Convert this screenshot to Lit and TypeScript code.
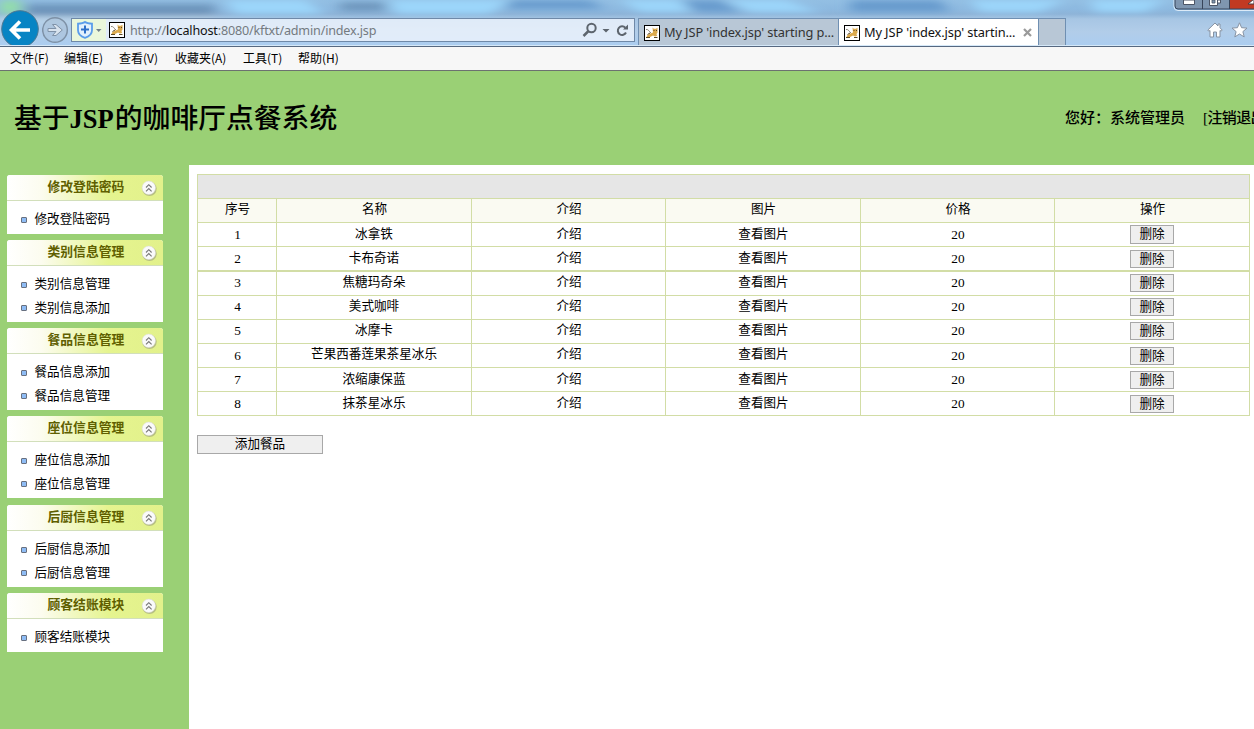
import { LitElement, html, css } from "lit";
import { customElement, property } from "lit/decorators.js";

const favicon = html`<svg width="16" height="16" viewBox="0 0 16 16">
  <rect x=".5" y=".5" width="15" height="15" fill="#fff" stroke="#000" />
  <path d="M2 4.500c2.500-.5 3 2 5 3.500" fill="none" stroke="#8a8678" stroke-width="1" />
  <path d="M8.500 2.500l1.300 1.300h2L13.500 2.800v4.700l-1 1.500.5 2-2 .500-2-1-3 1.500H2.500l1-2L6.500 8.500l2.500-1z" fill="#dba94c" />
  <path d="M9.500 5.500h1M12 5.500h1M2 12.500h4M10 12.500h3.500M3.500 9.500L6 8" stroke="#5b4a28" stroke-width="1" />
</svg>`;

@customElement("browser-bar")
class BrowserBar extends LitElement {
  static styles = css`
    :host { display: block; font-family: "Noto Sans", "Noto Sans CJK SC", sans-serif; }
    svg { display: block; flex: none; }
    .glass { position: relative; overflow: hidden; height: 46px; box-sizing: border-box; border-bottom: 1px solid #d5e8f8;
      background: linear-gradient(#93bfe3 0, #8db9e0 9px, #8eb4d8 14px, #a7c6e4 19px, #b2cde9 32px, #abcdf0 46px); }
    .haze { position: absolute; left: 0; top: 0; }
    .row { position: relative; display: flex; height: 45px; padding-left: 1px; box-sizing: border-box; }
    .back { margin-top: 10px; }
    .fwd { margin: 16px 0 0 2px; }
    .addr { display: flex; align-items: center; box-sizing: border-box; width: 564px; height: 24px; margin: 18px 0 0 2px;
      border: 1px solid #6f89a8; background: rgba(240, 246, 254, 0.76); color: #747a80; }
    .shield { display: flex; align-items: center; width: 34px; height: 22px; background: #eaf7dc; margin-right: 3px; }
    .url { flex: 1; margin-left: 5px; white-space: nowrap; font-size: 12.6px; letter-spacing: -0.18px; }
    .url b { font-weight: 400; color: #111; }
    .tools { margin-right: 2px; }
    .tab { display: flex; align-items: center; box-sizing: border-box; height: 27px; margin-top: 18px; padding: 1px 0 0 5px;
      border: 1px solid #6f8fb2; border-bottom: 0; font-size: 12.8px; letter-spacing: -0.12px; color: #333; background: #b8c7d6; white-space: nowrap; }
    .tab span { margin: -2px 0 0 4px; }
    .t1 { width: 201px; margin-left: 3px; }
    .t2 { width: 200px; background: #fff; color: #111; border-left: 0; }
    .t3 { width: 27px; border-left: 0; }
    .x { margin-left: 8px; }
    .right { display: flex; gap: 8px; margin: 22px 0 0 141px; }
    .win { position: absolute; right: 0; top: 0; }
    .menu { height: 25px; box-sizing: border-box; border-top: 1px solid #566880; border-bottom: 1px solid #6c7170; background: #f7f7f7;
      display: flex; padding-left: 10px; font: 12px/22px "Noto Sans CJK SC", sans-serif; color: #000; }
    .menu span { white-space: nowrap; width: 55px; }
    .menu .w54 { width: 54px; }
    .menu .w56 { width: 56px; }
    .menu .w68 { width: 68px; }
  `;
  render() {
    return html`
      <div class="glass">
        <svg class="haze" width="1254" height="46">
          <defs><filter id="f" x="-20%" y="-80%" width="140%" height="260%"><feGaussianBlur stdDeviation="7 3" /></filter></defs>
          <g filter="url(#f)">
            <path d="M25 4H215V16H25zM340 2h45v9h-45z" fill="#53779e" opacity=".55" />
            <path d="M0 0H20V14H0z" fill="#93dfa8" />
            <path d="M225 0h80l20 14h-90zM390 0h120l-20 14h-95zM620 0h60l10 12h-50zM725 0h60l35 12h-70zM970 0h95l-25 12h-60zM1090 0h75l-20 12h-50z" fill="#9ddaff" opacity=".85" />
            <path d="M510 0h80l15 9h-100zM680 0h40l22 12h-45zM850 0h90l10 12h-100z" fill="#5f94c9" opacity=".8" />
            <path d="M0 17H215V24H0z" fill="#c8ddef" opacity=".6" />
          </g>
        </svg>
        <div class="row">
          <svg class="back" width="39" height="35" viewBox="0 0 39 35">
            <circle cx="19" cy="19" r="18.300" fill="#0784c4" stroke="#4e7892" />
            <path d="M29 20H11M19 11.500L10.500 20l8.500 8.500" fill="none" stroke="#fff" stroke-width="3.600" />
          </svg>
          <svg class="fwd" width="27" height="28" viewBox="0 0 27 28">
            <circle cx="13" cy="14" r="12.300" fill="#a9c0d6" fill-opacity=".5" stroke="#7e91a6" stroke-width="1.500" />
            <path d="M6 12.500h8l-3.500-4H14l6.300 5.500-6.300 5.500h-3.500l3.500-4H6z" fill="#d8e3ee" stroke="#7f92a8" />
          </svg>
          <div class="addr">
            <div class="shield"><svg width="34" height="22" viewBox="0 0 34 22">
              <path d="M13 3c-1.800 1.400-4 1.600-7 1.600v6.600c0 4 3 6.300 7 7.600 4-1.300 7-3.600 7-7.600V4.600c-3 0-5.200-.2-7-1.600z" fill="#e2f1fd" stroke="#5a9dea" stroke-width="1.800" />
              <path d="M13 6.500v8M9 10.500h8" stroke="#2e70c8" stroke-width="2" />
              <path d="M24 10h5.500L26.700 13z" fill="#71808c" /></svg></div>
            ${favicon}
            <div class="url">http://<b>localhost</b>:8080/kftxt/admin/index.jsp</div>
            <svg class="tools" width="50" height="22" viewBox="0 0 50 22">
              <g fill="none" stroke="#5d656e" stroke-width="2">
                <circle cx="9.500" cy="9" r="4.200" /><path d="M6.500 12L1.500 17" stroke-width="2.500" />
                <path d="M43.300 8.700A4.300 4.300 0 1 0 44 13.500" />
              </g>
              <path d="M20.500 10h7L24 13.500zM41 10.500h5V5.500z" fill="#5d656e" />
            </svg>
          </div>
          <div class="tab t1">${favicon}<span>My JSP 'index.jsp' starting p...</span></div>
          <div class="tab t2">${favicon}<span>My JSP 'index.jsp' startin...</span>
            <svg class="x" width="9" height="9"><path d="M1 1l7 7M8 1L1 8" stroke="#9a9a9a" stroke-width="2.200" /></svg></div>
          <div class="tab t3"></div>
          <div class="right">
            <svg width="16" height="16" viewBox="0 0 16 16"><path d="M8 1L.8 8l1 1.200L3 8.500V15h3.500v-5h3v5H13V8.500l1.200.7 1-1.200L13 5.800V2h-2v2z" fill="#fff" stroke="#8793a3" /></svg>
            <svg width="17" height="16" viewBox="0 0 17 16"><path d="M8.500.8l2.100 4.900 5.400.4-4.100 3.500 1.300 5.300-4.700-2.900-4.700 2.900 1.300-5.300L1 6.100l5.400-.4z" fill="#fff" stroke="#8793a3" /></svg>
          </div>
        </div>
        <svg class="win" width="81" height="12" viewBox="0 0 81 12">
          <path d="M1 0v7q0 3.500 4 3.500h76" fill="none" stroke="#dcebf8" />
          <path d="M2 0v6q0 3 3 3h24V0z" fill="#7f96b0" /><path d="M30 0h26v9H30z" fill="#7f96b0" />
          <path d="M57 0h24v9H57z" fill="#c13a22" />
          <path d="M2 0v6q0 3 3 3h76M29.500 0v9M56.500 0v9" fill="none" stroke="#38455a" />
          <path d="M10.500 0h11v4.500h-11z" fill="#fff" stroke="#4c5566" />
          <path d="M36.500-1h8v6.500h-8z" fill="#fff" stroke="#4c5566" /><path d="M39 0h3v3h-3z" fill="#7f96b0" stroke="#4c5566" stroke-width=".8" /><path d="M45 0h2.500v3H45" fill="#fff" stroke="#4c5566" />
          <path d="M75 4l6-5v5z" fill="#fff" stroke="#4c3a40" />
        </svg>
      </div>
      <div class="menu"><span class="w54">文件(F)</span><span>编辑(E)</span><span class="w56">查看(V)</span><span class="w68">收藏夹(A)</span><span>工具(T)</span><span>帮助(H)</span></div>
    `;
  }
}

@customElement("side-panel")
class SidePanel extends LitElement {
  @property() heading = "";
  @property({ attribute: false }) items: string[] = [];
  static styles = css`
    :host { display: block; width: 156px; background: #fff; box-sizing: border-box; overflow: hidden;
      border-radius: 3px 3px 0 0; font-family: "Noto Sans CJK SC", sans-serif; }
    .head { display: flex; align-items: center; height: 26px; box-sizing: border-box; border-bottom: 1px solid #d2dfbb;
      background: linear-gradient(90deg, #fff 0, #fcfcef 22%, #e5f48f 65%, #e2f18b 100%); }
    .head span { flex: 1; padding-left: 40.500px; font-size: 12.8px; line-height: 22px; height: 26px; font-weight: 700; color: #5f5f00; white-space: nowrap; }
    .head svg { flex: none; margin-right: 5px; }
    .body { padding: 6px 0 0 14px; }
    .item { display: flex; align-items: center; height: 23.5px; box-sizing: border-box; padding-bottom: 1px; font-size: 12.6px; line-height: 22px; color: #000; white-space: nowrap; }
    .item i { box-sizing: border-box; width: 6px; height: 6px; border: 1px solid #68707f; border-radius: 1px; background: #8ebcf5; margin: 3px 7.500px 0 0; }
  `;
  render() {
    return html`<div class="head"><span>${this.heading}</span>
        <svg width="18" height="18" viewBox="0 0 18 18"><circle cx="9.500" cy="9.800" r="7.200" fill="#a4a97f" opacity=".7" /><circle cx="8.800" cy="8.800" r="6.700" fill="#fafafa" stroke="#ddd" stroke-width=".5" />
          <path d="M6 8.500L8.800 5.700l2.800 2.800M6 12.300l2.800-2.800 2.800 2.800" fill="none" stroke="#777" stroke-width="1.100" /></svg></div>
      <div class="body">${this.items.map((t) => html`<div class="item"><i></i>${t}</div>`)}</div>`;
  }
}

const panels: [string, string[], string][] = [
  ["修改登陆密码", ["修改登陆密码"], "h59"],
  ["类别信息管理", ["类别信息管理", "类别信息添加"], "h82"],
  ["餐品信息管理", ["餐品信息添加", "餐品信息管理"], "h82"],
  ["座位信息管理", ["座位信息添加", "座位信息管理"], "h82 late"],
  ["后厨信息管理", ["后厨信息添加", "后厨信息管理"], "h82"],
  ["顾客结账模块", ["顾客结账模块"], "h59"],
];
const dishes = ["冰拿铁", "卡布奇诺", "焦糖玛奇朵", "美式咖啡", "冰摩卡", "芒果西番莲果茶星冰乐", "浓缩康保蓝", "抹茶星冰乐"];
const rowClass = ["first low", "low", "thick up", "up", "up", "", "low", "low"];

@customElement("app-root")
class AppRoot extends LitElement {
  static styles = css`
    :host { display: flex; flex-direction: column; width: 1254px; height: 729px; overflow: hidden; background: #9ad075; color: #000;
      font-family: "Liberation Serif", "Noto Sans CJK SC", serif; }
    .banner { height: 94px; flex: none; display: flex; align-items: center; box-sizing: border-box; padding-left: 14px; white-space: nowrap; }
    .banner > * { flex: none; }
    h1 { margin: 1px 0 0; font-size: 27.8px; font-weight: 500; line-height: 40px; width: 1051px; }
    h1 b { font-weight: 700; font-size: 26.5px; margin-right: 1px; }
    .user, .out { font-size: 15px; font-weight: 500; line-height: 20px; margin-bottom: 3px; }
    .user { width: 138px; font-family: "Noto Sans CJK SC", sans-serif; }
    .out { letter-spacing: -0.6px; margin-bottom: 1px; }
    .mid { flex: 1; display: flex; min-height: 0; }
    .side { width: 189px; box-sizing: border-box; padding: 10px 0 0 7px; display: flex; flex-direction: column; gap: 6px; }
    .h59 { height: 59px; } .h82 { height: 82px; } .late { margin-bottom: 1px; }
    .main { flex: 1; background: #fff; padding: 9px 0 0 8px; }
    .table { width: 1053px; box-sizing: border-box; border-right: 1px solid #d2dda6; border-bottom: 1px solid #d2dda6; }
    .tr { display: grid; grid-template-columns: 79px 195px 194px 195px 194px 195px; height: 24px; box-sizing: border-box; border-top: 1px solid #d2dda6; }
    .thick { height: 25px; border-top-width: 2px; }
    .tr > div { border-left: 1px solid #d2dda6; display: flex; justify-content: center; align-items: flex-start; font-size: 12.6px; line-height: 21px; height: 23px; box-sizing: border-box; overflow: hidden; }
    .low > div { line-height: 23px; }
    .tr > .num { font-size: 13.3px; line-height: 23px; padding-left: 1px; }
    .up > .num { line-height: 21px; }
    .tr > .pad { padding-left: 1px; }
    .top > div { grid-column: 1 / -1; background: #e6e6e6; }
    .th > div { background: #fafaf2; }
    .btn { box-sizing: border-box; border: 1px solid #a8a8a8; background: #efefef; display: flex; align-items: flex-start; justify-content: center; font: 12.6px/13px "Noto Sans CJK SC", sans-serif; padding: 0; color: #000; }
    .del { width: 44px; height: 18px; margin-top: 3px; }
    .up .del { margin-top: 2px; }
    .first .del { height: 19px; margin-top: 2px; }
    .add { width: 126px; height: 19px; margin-top: 19px; }
  `;
  render() {
    return html`
      <browser-bar></browser-bar>
      <div class="banner"><h1>基于<b>JSP</b>的咖啡厅点餐系统</h1><span class="user">您好：系统管理员</span><span class="out">[注销退出]</span></div>
      <div class="mid">
        <div class="side">${panels.map(([h, i, c]) => html`<side-panel class=${c} .heading=${h} .items=${i}></side-panel>`)}</div>
        <div class="main">
          <div class="table">
            <div class="tr top"><div></div></div>
            <div class="tr th">${["序号", "名称", "介绍", "图片", "价格", "操作"].map((t) => html`<div class="pad">${t}</div>`)}</div>
            ${dishes.map((d, i) => html`<div class="tr ${rowClass[i]}"><div class="num">${i + 1}</div><div>${d}</div><div class="pad">介绍</div><div class="pad">查看图片</div><div class="num">20</div><div><button class="btn del">删除</button></div></div>`)}
          </div>
          <button class="btn add">添加餐品</button>
        </div>
      </div>`;
  }
}
